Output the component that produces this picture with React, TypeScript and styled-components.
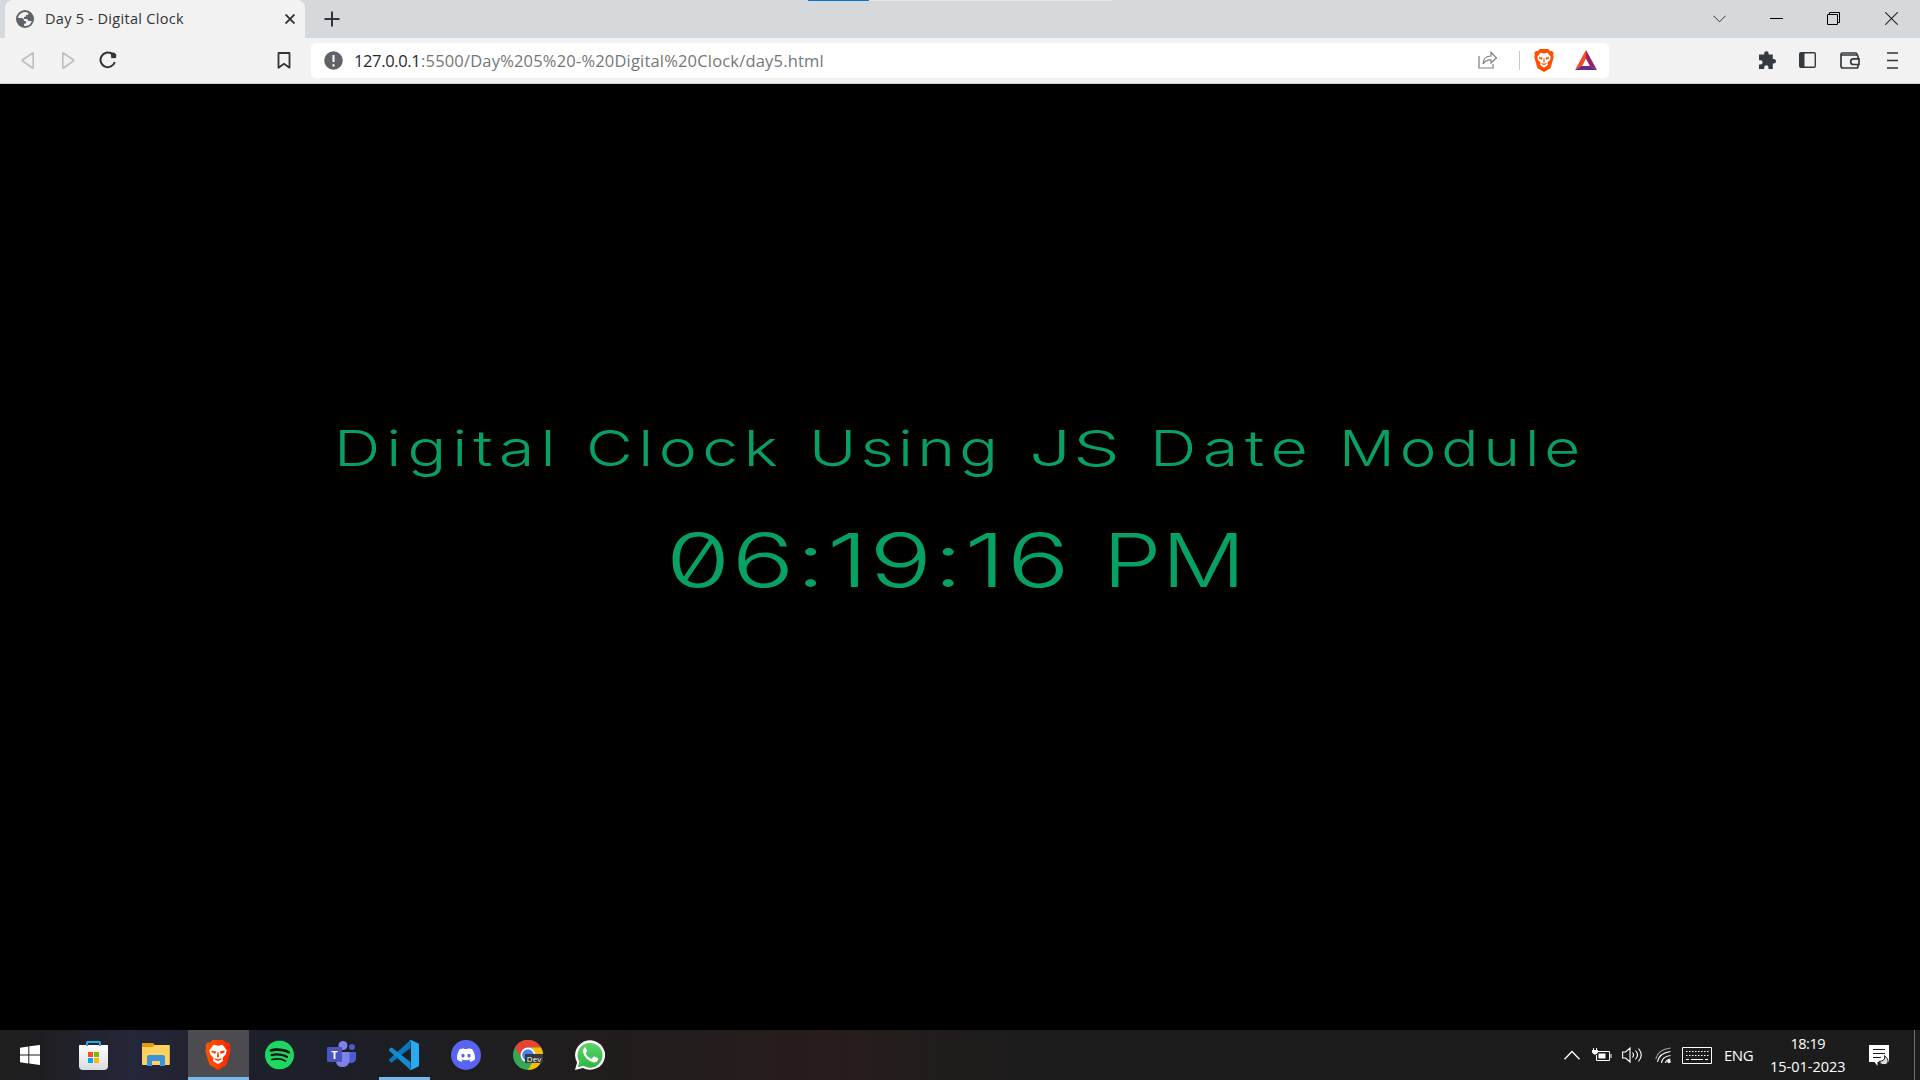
import React, { useLayoutEffect, useRef, useState } from "react";
import styled, { createGlobalStyle } from "styled-components";
import { SiSpotify, SiDiscord } from "react-icons/si";

const ui = `"Open Sans", "Noto Sans", sans-serif`;

const GlobalStyle = createGlobalStyle`
  * { box-sizing: border-box; }
  body { margin: 0; background: #000; overflow: hidden; }
  svg { display: block; flex: none; }
`;

const Screen = styled.div`
  width: 1920px;
  height: 1080px;
  display: flex;
  flex-direction: column;
  background: #000;
  font-family: ${ui};
`;

/* Text that tracks its letters out to fill a set width */
const FitBox = styled.span<{ $w: number }>`
  display: block;
  flex: none;
  width: ${(p) => p.$w}px;
  white-space: pre;
`;
const FitInner = styled.span<{ $stretch: number }>`
  display: inline-block;
  transform-origin: left;
  transform: scaleX(${(p) => p.$stretch});
`;
function Fit({ width, stretch = 1, children }: { width: number; stretch?: number; children: string }) {
  const ref = useRef<HTMLSpanElement>(null);
  const [spacing, setSpacing] = useState(0);
  useLayoutEffect(() => {
    const natural = ref.current!.offsetWidth;
    setSpacing((width / stretch - natural) / (children.length - 1));
  }, [width, stretch, children]);
  return (
    <FitBox $w={width}>
      <FitInner ref={ref} $stretch={stretch} style={{ letterSpacing: spacing }}>
        {children}
      </FitInner>
    </FitBox>
  );
}

const TabStrip = styled.header`
  height: 38px;
  flex: none;
  display: flex;
  align-items: flex-start;
  padding-left: 5px;
  background: #d5d9dc;
`;
const Tab = styled.div`
  width: 300px;
  height: 38px;
  display: flex;
  align-items: center;
  padding: 0 10px 0 11px;
  border-radius: 8px 8px 0 0;
  background: #f2f2f2;
  color: #2f3337;
  font-size: 14.5px;
  line-height: 38px;
`;
const Gap = styled.div<{ $w?: number }>`
  ${(p) => (p.$w ? `width: ${p.$w}px; flex: none;` : "flex: 1;")}
`;
const NewTab = styled.div`
  margin: 11px 0 0 19px;
`;
const LoadBar = styled.div`
  display: flex;
  width: 304px;
  height: 1px;
  margin-left: 468px;
  background: linear-gradient(90deg, #0078d7 61px, #e6e8ea 61px);
`;
const WindowButtons = styled.div`
  display: flex;
  align-items: center;
  height: 37px;
  gap: 44px;
  margin-left: auto;
  margin-right: 22px;
`;

const Toolbar = styled.nav`
  height: 46px;
  flex: none;
  display: flex;
  align-items: center;
  padding: 0 22px 1px 21px;
  background: #f2f2f2;
  border-bottom: 1px solid #d2d2d2;
`;
const AddressBar = styled.div`
  width: 1298px;
  height: 35px;
  display: flex;
  align-items: center;
  margin-left: 20px;
  padding: 0 12px 0 13px;
  border-radius: 5px;
  background: #fff;
  font-size: 16.5px;
  line-height: 35px;
`;
const Host = styled.span`
  color: #26292c;
`;
const Path = styled.span`
  color: #73777a;
`;
const Divider = styled.i`
  width: 1px;
  height: 19px;
  margin: 0 14px 0 21px;
  background: #c5c7c9;
`;

const Page = styled.main`
  height: 946px;
  flex: none;
  display: flex;
  flex-direction: column;
  background: #000;
  color: #06a163;
  font-family: Inter, "Liberation Sans", sans-serif;
  font-feature-settings: "zero" 1;
`;
const Heading = styled.h1`
  display: flex;
  gap: 31px;
  margin: 334px 0 0 334px;
  font-size: 49.5px;
  line-height: 60px;
  font-weight: 350;
`;
const Clock = styled.div`
  display: flex;
  gap: 34px;
  margin: 37px 0 0 666px;
  font-size: 74.3px;
  line-height: 90px;
  font-weight: 350;
`;

const Taskbar = styled.footer`
  height: 50px;
  flex: none;
  display: flex;
  color: #fff;
  background: linear-gradient(90deg, #1e1e1e 0, #1e1e22 40px, #25273a 130px, #222330 190px, #1d1f2a 250px, #1d1f28 330px, #1e1e21 450px, #211d1d 600px, #281c1c 830px, #211d1c 930px, #1c1c1c 1050px, #1c1c1c 100%);
`;
const Start = styled.div`
  width: 63px;
  padding: 15px 0 0 20px;
`;
const TaskButton = styled.div<{ $active?: boolean; $running?: boolean }>`
  width: 61px;
  height: 50px;
  display: flex;
  flex-direction: column;
  align-items: center;
  justify-content: space-between;
  margin-left: 1px;
  padding-top: 10px;
  background: ${(p) => (p.$active ? "#4b4b50" : "transparent")};
  & > svg {
    margin-left: -2px;
  }
  &::after {
    content: "";
    width: ${(p) => (p.$active ? 61 : 51)}px;
    height: 3px;
    background: ${(p) => (p.$active || p.$running ? "#76b9ed" : "transparent")};
  }
`;
const Tray = styled.div`
  display: flex;
  align-items: center;
  margin-left: auto;
  height: 50px;
  font-size: 15px;
`;
const DateTime = styled.div`
  display: flex;
  flex-direction: column;
  align-items: center;
  margin: 0 23px 0 16px;
  font-size: 14.5px;
  line-height: 23px;
`;
const ShowDesktop = styled.i`
  width: 6px;
  height: 50px;
  margin-left: 24px;
  border-left: 1px solid #707070;
`;

function BraveMark({ w, h, from = "#ff5000", to = "#ff5000" }: { w: number; h: number; from?: string; to?: string }) {
  const id = `brave${w}`;
  return (
    <svg width={w} height={h} viewBox="0 0 26 30" preserveAspectRatio="none">
      <defs>
        <linearGradient id={id}>
          <stop offset="0" stopColor={from} />
          <stop offset="1" stopColor={to} />
        </linearGradient>
      </defs>
      <path d="M7.500 0h11l2.500 2.800 2.300-.5 2.300 3-.8 2.500.9 2.600-3.700 13q-.4 1.400-1.600 2.200L13 30l-7.400-4.400Q4.400 24.800 4 23.400L.3 10.400l.9-2.600-.8-2.500 2.300-3L5 2.800z" fill={`url(#${id})`} />
      <path d="M8.500 4.800l4.500 1 4.500-1 4.200 5.400-.9 4-3.300 3.500.5 3.300L13 24.300 8 21l.5-3.300-3.300-3.500-.9-4z" fill="#fff" />
      <path d="M6.500 10.500l4.800 1-1.200 2.600-3.600-1.800zM19.500 10.500l-4.800 1 1.200 2.600 3.600-1.800zM12.500 12h1l.5 4.500-1 1.500-1-1.500zM9.700 18.300l3.300 1 3.300-1v1.200l-3.300 1.500-3.300-1.500z" fill={`url(#${id})`} />
    </svg>
  );
}

export default function App() {
  return (
    <Screen>
      <GlobalStyle />
      <TabStrip>
        <Tab>
          <svg width="18" height="18" viewBox="0 0 18 18">
            <circle cx="9" cy="9" r="9" fill="#5f6368" />
            <path d="M7.5 2.2C4.7 2.8 2.4 5 2 8l3.6.1c1.4 0 2.3.8 2.3 2v1h2v2.5l-1.8.1v2.2c3.8.5 6.9-1.6 7.7-5h-2.2c-1.5 0-2.2-.9-2.2-2H8V6.8h2V5.1h2.2l.1-2.1c-1.5-.8-3.2-1.1-4.8-.8z" fill="#f2f2f2" />
          </svg>
          <Gap $w={11} />
          <Fit width={139}>Day 5 - Digital Clock</Fit>
          <Gap />
          <svg width="10" height="10" viewBox="0 0 10 10"><path d="M.5.5l9 9m0-9l-9 9" stroke="#303438" strokeWidth="1.9" /></svg>
        </Tab>
        <NewTab>
          <svg width="16" height="16" viewBox="0 0 16 16"><path d="M8 .5v15M.5 8h15" stroke="#303438" strokeWidth="2" /></svg>
        </NewTab>
        <LoadBar />
        <WindowButtons>
          <svg width="13" height="8" viewBox="0 0 13 8"><path d="M.4.7l6.1 6.1L12.6.7" fill="none" stroke="#333" /></svg>
          <svg width="13" height="3" viewBox="0 0 13 3"><path d="M0 1.5h13" stroke="#000" /></svg>
          <svg width="14" height="13" viewBox="0 0 14 13" fill="none" stroke="#000"><path d="M.5 2.5h10v10H.5zM2.5 2.5v-2h10v10h-2" /></svg>
          <svg width="13" height="13" viewBox="0 0 13 13"><path d="M.3.3l12.4 12.4M12.7.3L.3 12.7" stroke="#222" strokeWidth="1.1" /></svg>
        </WindowButtons>
      </TabStrip>

      <Toolbar>
        <svg width="14" height="17" viewBox="0 0 14 17"><path d="M12.2 1.2v14.6q0 .6-.5.2L1.5 9q-.6-.5 0-1L11.7 1q.5-.3.5.2z" fill="none" stroke="#bcbebf" strokeWidth="1.6" /></svg>
        <Gap $w={26} />
        <svg width="14" height="17" viewBox="0 0 14 17"><path d="M1.8 1.2v14.6q0 .6.5.2L12.5 9q.6-.5 0-1L2.3 1q-.5-.3-.5.2z" fill="none" stroke="#bcbebf" strokeWidth="1.6" /></svg>
        <Gap $w={24} />
        <svg width="18" height="18" viewBox="0 0 18 18"><path d="M12.8 2.7A7.3 7.3 0 1 0 15.8 11" fill="none" stroke="#2f3438" strokeWidth="2" /><path d="M11.8 1.8l3.2-.3 2.3 2-.2 3.5-4.8.2z" fill="#2f3438" /></svg>
        <Gap $w={160} />
        <svg width="14" height="17" viewBox="0 0 14 17"><path d="M1.5 1h11v14.7L7 11.8l-5.5 3.9z" fill="none" stroke="#303438" strokeWidth="1.8" strokeLinejoin="round" /></svg>
        <AddressBar>
          <svg width="19" height="19" viewBox="0 0 19 19"><circle cx="9.5" cy="9.5" r="9.3" fill="#5f6368" /><path d="M9.5 4v7M9.5 13.3v2.2" stroke="#fff" strokeWidth="2" /></svg>
          <Gap $w={11} />
          <Host><Fit width={67}>127.0.0.1</Fit></Host>
          <Path><Fit width={403}>:5500/Day%205%20-%20Digital%20Clock/day5.html</Fit></Path>
          <Gap />
          <svg width="20" height="18" viewBox="0 0 20 18" fill="none" stroke="#7b7f82" strokeWidth="1.2"><path d="M1 5v12h14v-4M5 13c.3-5 3.3-8 8-8V1.3L18.5 7 13 12V8.8c-3.700-.2-6.300 1.200-8 4.200z" /></svg>
          <Divider />
          <BraveMark w={20} h={23} />
          <Gap $w={21} />
          <svg width="22" height="20" viewBox="0 0 22 20"><path d="M11 0L0 20l7.300-4.200L11 8.500z" fill="#ff4724" /><path d="M11 0l11 20-7.300-4.200L11 8.500z" fill="#9e1f63" /><path d="M0 20h22l-6.500-4H6.500z" fill="#662d91" /></svg>
        </AddressBar>
        <Gap />
        <svg width="19" height="18" viewBox="0 0 19 18"><path d="M1.500 3.500h4.700v-1a2.200 2.200 0 0 1 4.400 0v1h4.200v4.600h1a2.200 2.200 0 0 1 0 4.400h-1V18h-4.300v-1.500a2 2 0 0 0-4.300 0V18H1v-4.500h1.500a2.100 2.100 0 0 0 0-4.200H1V4q0-.5.5-.5z" fill="#343a3f" /></svg>
        <Gap $w={22} />
        <svg width="17" height="16" viewBox="0 0 17 16"><rect x=".7" y=".7" width="15.600" height="14.600" rx="1.300" fill="none" stroke="#343a3f" strokeWidth="1.400" /><path d="M1 1h4.500v14H1z" fill="#343a3f" /></svg>
        <Gap $w={24} />
        <svg width="20" height="17" viewBox="0 0 20 17" fill="none" stroke="#343a3f" strokeWidth="1.700"><path d="M18 7V4.500q0-1.500-1.500-1.500H1M1 2.500Q1 1 2.500 1h13q1.500 0 1.500 2M1 2v12q0 2 2 2h13.500q1.500 0 1.500-2v-1.500M19 6.800h-5.500a2.800 2.800 0 0 0 0 5.700H19z" /></svg>
        <Gap $w={27} />
        <svg width="11" height="17" viewBox="0 0 11 17"><path d="M0 1h11M0 8.500h11M0 16h11" stroke="#303438" strokeWidth="1.700" /></svg>
      </Toolbar>

      <Page>
        <Heading>
          <Fit width={221} stretch={1.3}>Digital</Fit>
          <Fit width={192} stretch={1.3}>Clock</Fit>
          <Fit width={188.5} stretch={1.3}>Using</Fit>
          <Fit width={90.5} stretch={1.5}>JS</Fit>
          <Fit width={158} stretch={1.3}>Date</Fit>
          <Fit width={241} stretch={1.25}>Module</Fit>
        </Heading>
        <Clock>
          <Fit width={403} stretch={1.4}>06:19:16</Fit>
          <Fit width={143} stretch={1.25}>PM</Fit>
        </Clock>
      </Page>

      <Taskbar>
        <Start>
          <svg width="20" height="20" viewBox="0 0 20 20" fill="#fff"><path d="M0 2.700L8.300 1.500v8H0zM9.300 1.300L20 0v9.500H9.300zM0 10.400h8.300v8L0 17.200zM9.300 10.400H20V20L9.300 18.600z" /></svg>
        </Start>
        <TaskButton>
          <svg width="29" height="30" viewBox="0 0 29 30">
            <defs><linearGradient id="bag" x2="0" y2="1"><stop stopColor="#fff" /><stop offset="1" stopColor="#d9dadd" /></linearGradient></defs>
            <path d="M0 5.500q0-.5.500-.500h28q.5 0 .5.500V26q0 4-4 4H4q-4 0-4-4z" fill="url(#bag)" />
            <path d="M8 6V2.500Q8 2 8.500 2h12q.5 0 .5.500V6" fill="none" stroke="#23a9e8" strokeWidth="2" />
            <path d="M9 12h5v5H9z" fill="#f25022" /><path d="M15 12h5v5h-5z" fill="#7fba00" /><path d="M9 18h5v5H9z" fill="#00a4ef" /><path d="M15 18h5v5h-5z" fill="#ffb900" />
          </svg>
        </TaskButton>
        <TaskButton>
          <svg width="28" height="30" viewBox="0 0 28 30">
            <path d="M0 4q0-1 1-1h10l2.500 2.500L11 8H0z" fill="#e19b0b" />
            <path d="M0 7h10.500L13 5h14q.800 0 .8.800V24q0 1-.8 1H1q-1 0-1-1z" fill="#ffd161" />
            <path d="M5 26V17q0-2 2-2h14q2 0 2 2v9h-5v-5h-8v5z" fill="#3b94d9" />
          </svg>
        </TaskButton>
        <TaskButton $active><BraveMark w={26} h={30} from="#ff5601" to="#ff2600" /></TaskButton>
        <TaskButton>
          <svg width="29" height="30" viewBox="0 0 24 24"><circle cx="12" cy="12" r="11" fill="#111" /><SiSpotify size={24} color="#1ed760" /></svg>
        </TaskButton>
        <TaskButton>
          <svg width="29" height="30" viewBox="0 0 29 30">
            <circle cx="25" cy="7" r="3" fill="#5059c9" /><path d="M20 12h9v7a5 5 0 0 1-9 2z" fill="#5059c9" />
            <circle cx="16" cy="5.500" r="4.500" fill="#7b83eb" /><path d="M9 12h13.500v9a7 7 0 0 1-13.500 1.500z" fill="#7b83eb" />
            <rect y="7" width="15" height="15" rx="1.300" fill="#4b53bc" />
            <text x="7.500" y="18.500" fontSize="11" fontWeight="700" textAnchor="middle" fill="#fff">T</text>
          </svg>
        </TaskButton>
        <TaskButton $running>
          <svg width="30" height="30" viewBox="0 0 30 30">
            <path d="M0 19.600L21.500 0v8L3 22.300q-.6.400-1.200 0L.2 20.800q-.5-.600-.2-1.200z" fill="#0878bd" />
            <path d="M0 10.400L21.500 30v-8L3 7.700q-.6-.4-1.200 0L.2 9.200q-.5.600-.2 1.200z" fill="#128bd2" />
            <path d="M21.500.200q.500-.300 1 0L29 3.200q1 .500 1 1.500v20.600q0 1-1 1.500l-6.500 3q-.5.300-1 0-1-.3-1.500-1 2 .5 2-1.500V2.700q0-2-2-1.500.5-.7 1.500-1z" fill="#29a9f2" />
          </svg>
        </TaskButton>
        <TaskButton>
          <svg width="30" height="30" viewBox="0 0 30 30"><circle cx="15" cy="15" r="15" fill="#5865f2" /><SiDiscord x="6" y="6" size={18} color="#fff" /></svg>
        </TaskButton>
        <TaskButton>
          <svg width="30" height="30" viewBox="0 0 30 30">
            <circle cx="15" cy="15" r="15" fill="#34a853" />
            <path d="M2 7.500A15 15 0 0 1 28 7.500H15a7.500 7.500 0 0 0-6.500 11.200z" fill="#ea4335" />
            <path d="M28 7.500A15 15 0 0 1 15 30l6.500-11.300A7.500 7.500 0 0 0 15 7.500z" fill="#fbbc04" />
            <circle cx="15" cy="15" r="7.500" fill="#fff" /><circle cx="15" cy="15" r="5.800" fill="#4285f4" />
            <rect x="12" y="14" width="18" height="9" fill="#343a3e" />
            <text x="21" y="21.500" fontSize="8" textAnchor="middle" fill="#fff">Dev</text>
          </svg>
        </TaskButton>
        <TaskButton>
          <svg width="30" height="30" viewBox="0 0 30 30">
            <defs><linearGradient id="wa" x2="0" y2="1"><stop stopColor="#5dd468" /><stop offset="1" stopColor="#2cb742" /></linearGradient></defs>
            <path d="M0 30l2.100-7.500A15 14.800 0 1 1 7.800 28z" fill="#fff" />
            <path d="M2.800 27.300l1.600-5.500A12.500 12.400 0 1 1 8.400 25.800z" fill="url(#wa)" />
            <path d="M10 7.500c-1.500.8-2.300 2.600-1.900 4.500 1 5 5.500 9.400 10.500 10.400 2 .3 3.800-.6 4.500-2.600.3-1 .1-1.500-.5-1.800l-3-1.500c-.6-.2-1-.1-1.400.4l-1.200 1.500c-.3.300-.6.300-1 .1-2.400-1-4-2.500-5.200-4.700-.2-.4-.1-.6.200-1l.9-1.200c.3-.4.3-.8.1-1.200l-1.200-2.700c-.3-.6-.8-.5-1.800-.2z" fill="#fff" />
          </svg>
        </TaskButton>

        <Tray>
          <svg width="16" height="10" viewBox="0 0 16 10"><path d="M.5 9.300L8 1.500l7.500 7.800" fill="none" stroke="#fff" strokeWidth="1.300" /></svg>
          <Gap $w={12} />
          <svg width="20" height="15" viewBox="0 0 20 15"><path d="M6 3.500h11.500v9H4.500V7M19 6v4" fill="none" stroke="#fff" /><path d="M6.500 5.500h7v5h-7zM0 2h6v2.500L4 6.500H2L0 4.500zM1 0h1v2H1zM4 0h1v2H4z" fill="#fff" /></svg>
          <Gap $w={10} />
          <svg width="21" height="18" viewBox="0 0 21 18" fill="none" stroke="#fff" strokeWidth="1.100"><path d="M.6 6h3L8 2v14l-4.400-4H.6zM10.500 6.500q2 2.500 0 5M13.500 4.500q4 4.500 0 9M16.500 2.500q5.500 6.500 0 13" /></svg>
          <Gap $w={12} />
          <svg width="16" height="18" viewBox="0 0 16 18" fill="none" stroke="#fff" strokeWidth="1.100"><path d="M.7 13Q3 3.500 15.500 2" opacity=".6" /><path d="M2.500 16Q4 7 15.500 5.500M6.500 17Q7 10.500 15.500 9.500M10.500 17Q11 13.500 15.500 13" /><circle cx="14" cy="15.500" r="1.200" fill="#fff" /></svg>
          <Gap $w={11} />
          <svg width="30" height="17" viewBox="0 0 30 17" fill="none" stroke="#fff"><path d="M.5.5h29v16H.5z" /><path d="M4 4.500h23M4 8.500h23" strokeDasharray="1.500 1.500" /><path d="M4 12.500h3m2 0h12m2 0h3" /></svg>
          <Gap $w={12} />
          <Fit width={30}>ENG</Fit>
          <DateTime>
            <Fit width={35}>18:19</Fit>
            <Fit width={76}>15-01-2023</Fit>
          </DateTime>
          <svg width="21" height="21" viewBox="0 0 21 21"><path d="M0 0h20v17H8.500v4l-3-4H0z" fill="#fff" /><path d="M4 4.500h12M4 8.500h12M4 12.500h8" stroke="#1c1c1c" strokeWidth="1.100" /><path d="M15.500 10.500q1.500 5.500-5.500 6 2.500 4.500 7 3 5-3-1.500-9z" fill="#ddd" stroke="#1c1c1c" /></svg>
          <ShowDesktop />
        </Tray>
      </Taskbar>
    </Screen>
  );
}
